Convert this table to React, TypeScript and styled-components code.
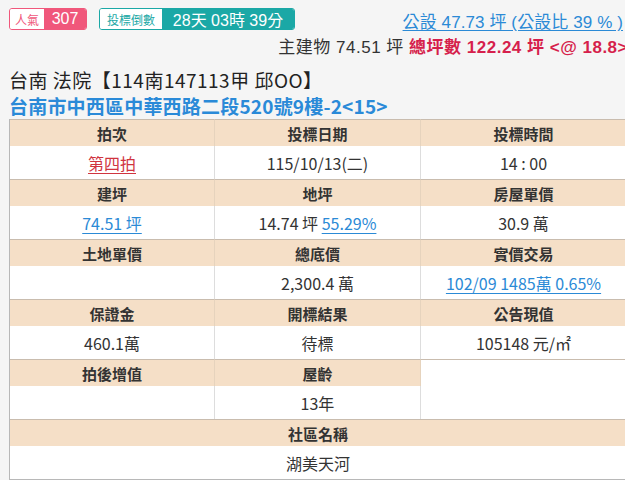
import React from "react";
import styled, { createGlobalStyle } from "styled-components";

const Global = createGlobalStyle`
  html, body { margin: 0; padding: 0; background: #f5f5f5; overflow: hidden; }
  body { font-family: "Liberation Sans", "Noto Sans CJK TC", sans-serif; color: #333; }
`;

const Page = styled.div`
  width: 619px;
  padding: 8px 0 0 9px;
`;

const TopRow = styled.div`
  display: flex;
  align-items: flex-start;
  justify-content: space-between;
  height: 28px;
`;

const Badges = styled.div`
  display: flex;
  gap: 12px;
`;

const Badge = styled.div<{ $c: string }>`
  display: flex;
  height: 22px;
  box-sizing: border-box;
  border: 1px solid ${(p) => p.$c};
  border-radius: 3px;
  overflow: hidden;
`;

const BadgeLabel = styled.span<{ $c: string; $w: number }>`
  width: ${(p) => p.$w}px;
  background: #fff;
  color: ${(p) => p.$c};
  font-size: 12px;
  display: flex;
  align-items: center;
  justify-content: center;
  font-family: "Noto Sans CJK TC", sans-serif;
`;

const BadgeValue = styled.span<{ $c: string; $w: number }>`
  width: ${(p) => p.$w}px;
  background: ${(p) => p.$c};
  color: #fff;
  font-size: 16px;
  display: flex;
  align-items: center;
  justify-content: center;
  font-family: "Liberation Sans", "Noto Sans CJK TC", sans-serif;
`;

const PublicLink = styled.a`
  color: #2b8ad6;
  font-size: 17px;
  letter-spacing: 0.1px;
  text-decoration: underline;
  text-underline-offset: 2px;
  white-space: nowrap;
  height: 24px;
  margin-right: 5px;
`;

const AreaLine = styled.div`
  text-align: right;
  font-size: 17px;
  letter-spacing: 0.5px;
  color: #333;
  white-space: nowrap;
  height: 26px;
  line-height: 24px;
  margin-bottom: 5px;
`;

const Red = styled.span`
  color: #d61f4c;
  font-weight: bold;
`;

const Title = styled.div`
  font-family: "Noto Sans CJK TC", sans-serif;
  font-size: 19px;
  letter-spacing: 0.5px;
  color: #222;
  height: 26px;
  line-height: 26px;
  white-space: nowrap;
`;

const Address = styled.div`
  font-family: "Noto Sans CJK TC", sans-serif;
  font-size: 19px;
  letter-spacing: 0.2px;
  font-weight: bold;
  color: #2a8ad8;
  height: 26px;
  line-height: 26px;
  white-space: nowrap;
`;

const Table = styled.div`
  display: grid;
  grid-template-columns: 205px 206px 206px;
  border-left: 1px solid #b8b8b8;
  border-bottom: 1px solid #b8b8b8;
  font-family: "Noto Sans CJK TC", sans-serif;
`;

const Head = styled.div<{ $span?: number }>`
  grid-column: span ${(p) => p.$span ?? 1};
  height: 27px;
  box-sizing: border-box;
  background: #f5dfc7;
  border-top: 1px solid #c9bcae;
  border-right: 1px solid #e6d3bd;
  display: flex;
  align-items: center;
  justify-content: center;
  font-size: 15px;
  font-weight: bold;
  color: #333;
`;

const Data = styled.div<{ $span?: number }>`
  grid-column: span ${(p) => p.$span ?? 1};
  height: 33px;
  background: #fff;
  border-right: 1px solid #ddd;
  display: flex;
  align-items: center;
  justify-content: center;
  font-size: 16px;
  color: #333;
  white-space: nowrap;
`;

const Blank = styled.div`
  grid-row: span 2;
  background: #fff;
  border-top: 1px solid #c9bcae;
`;

const Link = styled.a<{ $red?: boolean }>`
  color: ${(p) => (p.$red ? "#d0343f" : "#2b8ad6")};
  text-decoration: underline;
  text-underline-offset: 3px;
`;

export default function App() {
  return (
    <>
      <Global />
      <Page>
        <TopRow>
          <Badges>
            <Badge $c="#f0577b">
              <BadgeLabel $c="#f0577b" $w={34}>人氣</BadgeLabel>
              <BadgeValue $c="#f0577b" $w={42}>307</BadgeValue>
            </Badge>
            <Badge $c="#1ba8a6">
              <BadgeLabel $c="#1ba8a6" $w={62}>投標倒數</BadgeLabel>
              <BadgeValue $c="#1ba8a6" $w={132}>28天 03時 39分</BadgeValue>
            </Badge>
          </Badges>
          <PublicLink>公設 47.73 坪 (公設比 39 % )</PublicLink>
        </TopRow>
        <AreaLine>
          主建物 74.51 坪 <Red>總坪數 122.24 坪 &lt;@ 18.8&gt;</Red>
        </AreaLine>
        <Title>台南 法院【114南147113甲 邱OO】</Title>
        <Address>台南市中西區中華西路二段520號9樓-2&lt;15&gt;</Address>
        <Table>
          <Head>拍次</Head>
          <Head>投標日期</Head>
          <Head>投標時間</Head>
          <Data><Link $red>第四拍</Link></Data>
          <Data>115/10/13(二)</Data>
          <Data>14 : 00</Data>

          <Head>建坪</Head>
          <Head>地坪</Head>
          <Head>房屋單價</Head>
          <Data><Link>74.51 坪</Link></Data>
          <Data>14.74 坪&nbsp;<Link>55.29%</Link></Data>
          <Data>30.9 萬</Data>

          <Head>土地單價</Head>
          <Head>總底價</Head>
          <Head>實價交易</Head>
          <Data></Data>
          <Data>2,300.4 萬</Data>
          <Data><Link>102/09 1485萬 0.65%</Link></Data>

          <Head>保證金</Head>
          <Head>開標結果</Head>
          <Head>公告現值</Head>
          <Data>460.1萬</Data>
          <Data>待標</Data>
          <Data>105148 元/㎡</Data>

          <Head>拍後增值</Head>
          <Head>屋齡</Head>
          <Blank />
          <Data></Data>
          <Data>13年</Data>

          <Head $span={3}>社區名稱</Head>
          <Data $span={3}>湖美天河</Data>
        </Table>
      </Page>
    </>
  );
}
